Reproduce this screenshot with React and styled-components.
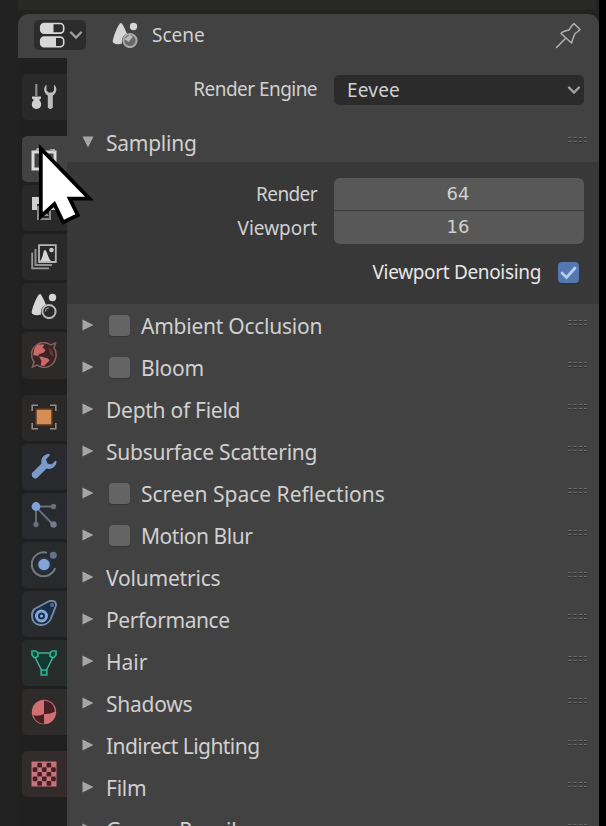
import React from 'react';
import styled, { createGlobalStyle } from 'styled-components';

const GlobalStyle = createGlobalStyle`
    * {
        box-sizing: border-box;
    }

    body {
        margin: 0;
        background: #000;
        font-family: 'Noto Sans', 'DejaVu Sans', sans-serif;
        color: #d0d0d0;
    }
`

const Screen = styled.div`
    position: relative;
    width: 606px;
    height: 826px;
    overflow: hidden;
    padding: 14px 7px 0 18px;
    background: linear-gradient(90deg, #222 0 599px, #000 599px);

    &::before {
        content: '';
        position: absolute;
        top: 0;
        left: 18px;
        width: 578px;
        height: 10px;
        background: #282826;
    }
`

const Editor = styled.main`
    width: 581px;
    height: 812px;
    border-radius: 11px 11px 0 0;
    background: #424242;
    overflow: hidden;
`

const Header = styled.header`
    display: flex;
    align-items: center;
    height: 44px;
    padding: 0 17px 2px 16px;

    .pin {
        margin-left: auto;
    }
`

const EditorType = styled.button`
    display: flex;
    align-items: center;
    gap: 4px;
    width: 52px;
    height: 30px;
    margin-right: 26px;
    padding: 0 3px 0 5px;
    border: 0;
    border-radius: 5px;
    background: #2c2c2c;
`

const HeaderText = styled.span`
    margin-left: 14px;
    font-size: 19px;
    line-height: 24px;
`

const Body = styled.div`
    display: flex;
    height: 768px;
`

const Tabs = styled.nav`
    display: flex;
    flex-direction: column;
    gap: 3px;
    width: 49px;
    flex: none;
    padding: 16px 0 0 4px;
    background: #202020;
`

const Tab = styled.div`
    display: grid;
    place-items: center;
    flex: none;
    height: 46.1px;
    padding: 0 1px 1px 0;
    margin-top: ${({ $first }) => ($first ? '13px' : 0)};
    border-radius: 5px 0 0 5px;
    background: ${({ $active, $tint }) => ($active ? '#424242' : $tint || '#292929')};
`

const Properties = styled.div`
    flex: 1;
    min-width: 0;
`

const Field = styled.div`
    display: grid;
    grid-template-columns: 250px 250px;
    column-gap: 17px;
    align-items: center;
`

const EngineField = styled(Field)`
    padding-top: 17px;
    height: 63px;
    align-items: start;
`

const Label = styled.label`
    font-size: 19px;
    line-height: 29px;
    letter-spacing: ${({ $spacing }) => $spacing || 0}px;
    text-align: right;
    white-space: nowrap;
`

const Select = styled.div`
    display: flex;
    align-items: center;
    justify-content: space-between;
    height: 30px;
    padding: 0 3px 1px 13px;
    border-radius: 5px;
    background: #2b2b2b;
    font-size: 19px;
    letter-spacing: 0.2px;
`

const PanelRow = styled.div`
    display: flex;
    align-items: center;
    height: 42px;
    padding: 0 12px 0 15px;

    .grip {
        margin: -4px 0 0 auto;
    }
`

const PanelTitle = styled.span`
    margin-left: ${({ $checkable }) => ($checkable ? '11px' : '12px')};
    padding-top: 2px;
    font-size: 21px;
    line-height: 28px;
    letter-spacing: ${({ $spacing }) => $spacing || 0}px;
    white-space: nowrap;
`

const Checkbox = styled.span`
    display: grid;
    place-items: center;
    width: 21px;
    height: 21px;
    margin-left: ${({ $checked }) => ($checked ? '17px' : '15px')};
    border-radius: 4px;
    background: ${({ $checked }) => ($checked ? '#5477b0' : '#646464')};
    box-shadow: 0 1px 1px #353535;
`

const SamplingBody = styled.section`
    height: 142px;
    padding-top: 15px;
    background: #383838;
`

const NumberStack = styled.div`
    display: grid;
    grid-template-rows: 32px 33px;
    row-gap: 1px;
    border-radius: 6px;
    overflow: hidden;
    background: #3b3b3b;
`

const NumberInput = styled.div`
    background: #585858;
    font-family: 'DejaVu Sans', sans-serif;
    font-size: 18px;
    line-height: 32px;
    padding-right: 2px;
    text-align: center;
`

const LabelStack = styled.div`
    display: grid;
    grid-template-rows: 34px 34px;
    align-items: center;
`

const Denoising = styled.div`
    display: flex;
    align-items: center;
    justify-content: flex-end;
    padding: 13px 20px 0 0;
    font-size: 19px;
    line-height: 28px;
    letter-spacing: -0.34px;
    color: #e6e6e6;
`

const Cursor = styled.svg`
    position: absolute;
    left: 34px;
    top: 138px;
`

const Chevron = () => (
    <svg width="14" height="10" viewBox="0 0 14 10" fill="none">
        <path d="M2 2.5l5 5 5-5" stroke="#a0a0a0" strokeWidth="2.4" strokeLinecap="round" />
    </svg>
)

const Arrow = ({ open }) => (
    <svg className="arrow" width="12" height="12" viewBox="0 0 12 12">
        <path d={open ? 'M0.5 0.5h11L6 11.5z' : 'M0.5 0.5v11L11.5 6z'} fill="#a6a6a6" />
    </svg>
)

const Grip = () => (
    <svg className="grip" width="20" height="8" viewBox="0 0 20 8">
        <path d="M1 1.5h19M1 5.5h19" stroke="#6c6c6c" strokeWidth="1" strokeDasharray="3.5 1.8" />
        <path d="M1 2.5h19M1 6.5h19" stroke="#2e2e2e" strokeWidth="1" strokeDasharray="3.5 1.8" />
    </svg>
)

const Icon = ({ children, size = 26, ...rest }) => (
    <svg width={size} height={size} viewBox="0 0 26 26" fill="none" {...rest}>{children}</svg>
)

const EditorIcon = () => (
    <Icon style={{ flex: 'none' }}>
        <rect x="1.7" y="1.5" width="23" height="9.6" rx="3.5" stroke="#d8d8d8" strokeWidth="1.6" />
        <path d="M5 1.500h9.500v9.600H5a3.500 3.500 0 0 1-3.500-3.500V5A3.500 3.500 0 0 1 5 1.500z" fill="#d8d8d8" />
        <rect x="1.7" y="15.1" width="23" height="9.6" rx="3.5" stroke="#d8d8d8" strokeWidth="1.6" />
        <path d="M5 15.1h12v9.6H5a3.500 3.500 0 0 1-3.500-3.500v-2.600A3.500 3.500 0 0 1 5 15.1z" fill="#d8d8d8" />
    </Icon>
)

const SceneIcon = ({ solid }) => (
    <Icon style={{ flex: 'none' }}>
        <path d="M9 1C10.500 1 14 9 15 12C11.500 13 9.500 16 10 21.500C6 23 1 22 0.700 19.500C1.500 14 6.500 1 9 1z" fill="#d6d6d6" />
        <circle cx="21.500" cy="4.500" r="3.700" fill="#d6d6d6" />
        <circle cx="18" cy="18.500" r="6.600" stroke={solid ? '#acacac' : '#bababa'} strokeWidth="2" fill={solid ? '#696969' : '#2a2a2a'} />
        {solid ? <path d="M12.500 17l4 3 4.500-5.500-3.500-1.500z" fill="#bdbdbd" /> : <path d="M14.500 18.500a3.500 3.500 0 0 1 3.500-3.500" stroke="#999" strokeWidth="1.200" />}
    </Icon>
)

const PinIcon = () => (
    <svg className="pin" width="27" height="27" viewBox="0 0 27 27" fill="none">
        <path d="M19 1.500L25 7.500L23 9.500L20 11.500Q18 16 16.500 21L6 11.500Q7 9.500 14 8L17 3.500zM10 17L1.500 25.500" stroke="#b0b0b0" strokeWidth="1.500" strokeLinejoin="round" strokeLinecap="round" />
    </svg>
)

const ToolIcon = () => (
    <Icon>
        <path d="M5.300 0v12" stroke="#8c8c8c" strokeWidth="2.200" />
        <path d="M1 12.500h9v2L8 16c3 1.500 3.500 9-2.500 9S0 17.500 3 16L1 14.500z" fill="#d0d0d0" />
        <path d="M15.500 0.500C11.500 4 13 9.500 16.800 11.500V23.500q2.500 3 5 0V11.500C25.500 9.500 27 4 23 0.500V6.500L21.200 8.500H17.500L15.500 6.500z" fill="#bdbdbd" />
    </Icon>
)

const RenderIcon = () => (
    <Icon>
        <rect x="2" y="6" width="22" height="17" stroke="#dadada" strokeWidth="3" />
        <path d="M4 5l2-3h5v3M18 3h6v3" fill="#aaa" />
        <path d="M18 10h4v9h-4z" fill="#555" />
    </Icon>
)

const OutputIcon = () => (
    <Icon>
        <path d="M1 2h24v13h-5V9H6v6H1z" fill="#cfcfcf" />
        <path d="M7 12h12v12H7z" stroke="#8c8c8c" strokeWidth="2" />
        <path d="M9 21l4-6 5 6z" fill="#999" />
    </Icon>
)

const LayersIcon = () => (
    <Icon>
        <path d="M1.200 8.500v15.800H18" stroke="#999" strokeWidth="1.800" />
        <path d="M4.500 5v16H21" stroke="#8f8f8f" strokeWidth="2" />
        <path d="M8 1.200h16.800V18H8z" stroke="#b5b5b5" strokeWidth="1.800" />
        <path d="M9 17c3-2 3-11 5-11s3 8.500 6 11z" fill="#d6d6d6" />
        <circle cx="20.500" cy="6" r="2.300" fill="#cacaca" />
    </Icon>
)

const WorldIcon = () => (
    <Icon>
        <path d="M5 3.500C10-1 16 0 20 3L24.500 1L23 6C27 12 25 19 20.500 23C15 27 9 25.500 6 23L1.500 25L3 20C-1 14 0 7 5 3.500z" fill="#3c2324" stroke="#875f60" strokeWidth="1.500" />
        <path d="M3.500 6L7 2.500L13.500 2.500L11.500 5.500L14.500 8L13 10.500L8.500 12L7 14L2 13zM8 14.500L12 15L17 16.500L18.500 18.500L13 24L9.500 23.500L10.500 19z" fill="#c96a6a" />
        <path d="M17.500 5.500L20.500 7.500L23 14.500L19.500 13z" fill="#65393b" />
    </Icon>
)

const ObjectIcon = () => (
    <Icon>
        <rect x="5" y="5" width="16" height="16" fill="#d38d55" stroke="#5a371f" strokeWidth="1.500" />
        <path d="M1.200 7V1.200H7M19 1.200h5.800V7M24.800 19v5.800H19M7 24.800H1.200V19" stroke="#948b86" strokeWidth="1.600" />
    </Icon>
)

const WrenchIcon = () => (
    <Icon>
        <path d="M18 .8C12 1.500 9.500 6 10.500 10.500L1 20Q0 24 3.500 25.500Q5.500 26 7 24L15.500 15.500C20 17.200 25.500 13.500 25.500 8.500L24.800 7.500L20.500 11.500L16.500 10.500L15 6.500L19 2z" fill="#7b9acb" />
    </Icon>
)

const ParticlesIcon = () => (
    <Icon>
        <path d="M5 4.500h17M5 5v17M6 6l15 15.500" stroke="#66707d" strokeWidth="1.900" />
        <circle cx="5" cy="4.500" r="4.400" fill="#7fa2d8" />
        <circle cx="22.500" cy="4.500" r="2.700" fill="#68707b" />
        <circle cx="5" cy="22.500" r="2.700" fill="#68707b" />
        <circle cx="22.500" cy="22.500" r="3.200" fill="#737c8a" />
    </Icon>
)

const PhysicsIcon = () => (
    <Icon>
        <path d="M16 1.700A12 12 0 1 0 24.200 17" stroke="#737b87" strokeWidth="1.900" />
        <circle cx="13" cy="13.500" r="8" fill="#223348" />
        <circle cx="13" cy="13.500" r="5.700" fill="#86a3d8" />
        <circle cx="22.300" cy="4.300" r="3.500" fill="#63728c" />
    </Icon>
)

const ConstraintIcon = () => (
    <Icon>
        <path d="M3.500 9L16.500 2C21-.5 26 1 24.800 6L20 18.500C16 28 1 27 1 16Q.800 11.500 3.500 9z" fill="#1a2e46" stroke="#768ba8" strokeWidth="1.900" />
        <circle cx="10.500" cy="16" r="5" stroke="#86a5d8" strokeWidth="3" />
        <circle cx="10.500" cy="16" r="1.500" fill="#94b0de" />
        <circle cx="21" cy="5" r="2" fill="#506c92" />
    </Icon>
)

const MeshIcon = () => (
    <Icon>
        <path d="M8 4h10l3 4-6 11h-4L5 8z" fill="#123a32" />
        <path d="M6.500 3H19.500M3.800 7L10.500 20M22.200 7L15.500 20" stroke="#4aae95" strokeWidth="1.600" />
        <path d="M1 1h4l2 2v3L5 7.500H3L1 5zM25 1h-4l-2 2v3l2 1.500h2L25 5zM10.200 20h5.600v5h-5.600z" fill="#0d4a3b" stroke="#2fb492" strokeWidth="1.600" />
    </Icon>
)

const MaterialIcon = () => (
    <Icon>
        <circle cx="13" cy="13" r="12.200" fill="#d07072" />
        <path d="M13 1.500V15Q19 15.500 24 12.500Q23 2.500 13 1.500z" fill="#451f24" />
        <path d="M2.300 16Q7 18 13 15v10Q4.500 24 2.300 16z" fill="#451f24" />
    </Icon>
)

const dark = [[1, 0], [3, 0], [0, 1], [2, 1], [4, 1], [1, 2], [3, 2], [0, 3], [2, 3], [4, 3], [1, 4], [3, 4]]

const TextureIcon = () => (
    <Icon>
        <path d="M.5.5h25v25H.5z" fill="#c4757a" />
        {dark.map(([x, y]) => (
            <rect key={`${x}${y}`} x={1.7 + x * 4.6} y={1.7 + y * 4.6} width="4.700" height="4.700" rx="1.2" fill="#471e25" />
        ))}
    </Icon>
)

const tabs = [
    { name: 'tool', icon: ToolIcon },
    { name: 'render', icon: RenderIcon, first: true, active: true },
    { name: 'output', icon: OutputIcon },
    { name: 'view-layer', icon: LayersIcon },
    { name: 'scene', icon: SceneIcon },
    { name: 'world', icon: WorldIcon, tint: '#2c2929' },
    { name: 'object', icon: ObjectIcon, first: true, tint: '#2b2927' },
    { name: 'modifiers', icon: WrenchIcon, tint: '#292a2d' },
    { name: 'particles', icon: ParticlesIcon, tint: '#282a2d' },
    { name: 'physics', icon: PhysicsIcon, tint: '#292a2c' },
    { name: 'constraints', icon: ConstraintIcon, tint: '#292a2c' },
    { name: 'data', icon: MeshIcon, tint: '#272b2a' },
    { name: 'material', icon: MaterialIcon, tint: '#2e2b2b' },
    { name: 'texture', icon: TextureIcon, first: true, tint: '#312b2c' },
]

const panels = [
    { title: 'Ambient Occlusion', checkable: true, spacing: -0.25 },
    { title: 'Bloom', checkable: true, spacing: -0.25 },
    { title: 'Depth of Field', spacing: -0.27 },
    { title: 'Subsurface Scattering', spacing: -0.22 },
    { title: 'Screen Space Reflections', checkable: true },
    { title: 'Motion Blur', checkable: true, spacing: -0.48 },
    { title: 'Volumetrics', spacing: -0.2 },
    { title: 'Performance', spacing: -0.4 },
    { title: 'Hair' },
    { title: 'Shadows', spacing: -0.25 },
    { title: 'Indirect Lighting', spacing: -0.55 },
    { title: 'Film', spacing: -0.25 },
    { title: 'Grease Pencil', spacing: -0.2 },
]

export default function App() {
    return (
        <Screen>
            <GlobalStyle />
            <Editor>
                <Header>
                    <EditorType><EditorIcon /><Chevron /></EditorType>
                    <SceneIcon solid />
                    <HeaderText>Scene</HeaderText>
                    <PinIcon />
                </Header>
                <Body>
                    <Tabs>
                        {tabs.map(({ name, icon: TabIcon, first, active, tint }) => (
                            <Tab key={name} $first={first} $active={active} $tint={tint}>
                                <TabIcon />
                            </Tab>
                        ))}
                    </Tabs>
                    <Properties>
                        <EngineField>
                            <Label $spacing={-0.55}>Render Engine</Label>
                            <Select>Eevee<Chevron /></Select>
                        </EngineField>
                        <PanelRow style={{ height: 41 }}>
                            <Arrow open />
                            <PanelTitle $spacing={-0.25}>Sampling</PanelTitle>
                            <Grip />
                        </PanelRow>
                        <SamplingBody>
                            <Field>
                                <LabelStack>
                                    <Label $spacing={-0.6}>Render</Label>
                                    <Label>Viewport</Label>
                                </LabelStack>
                                <NumberStack>
                                    <NumberInput>64</NumberInput>
                                    <NumberInput>16</NumberInput>
                                </NumberStack>
                            </Field>
                            <Denoising>
                                Viewport Denoising
                                <Checkbox $checked>
                                    <svg width="19" height="17" viewBox="0 0 19 17" fill="none">
                                        <path d="M3 9l4.500 4.500L16 4" stroke="#b4cff5" strokeWidth="2.800" strokeLinecap="round" />
                                    </svg>
                                </Checkbox>
                            </Denoising>
                        </SamplingBody>
                        {panels.map(({ title, checkable, spacing }) => (
                            <PanelRow key={title}>
                                <Arrow />
                                {checkable && <Checkbox />}
                                <PanelTitle $checkable={checkable} $spacing={spacing}>{title}</PanelTitle>
                                <Grip />
                            </PanelRow>
                        ))}
                    </Properties>
                </Body>
            </Editor>
            <Cursor width="66" height="92" viewBox="34 138 66 92">
                <path
                    d="M42.700 153.300V212.300L55 201L64 219.700L75.300 214.300L66.700 196.700H85z"
                    fill="#fff"
                    stroke="#000"
                    strokeWidth="7.500"
                    strokeMiterlimit="6"
                    paintOrder="stroke"
                />
            </Cursor>
        </Screen>
    )
}
